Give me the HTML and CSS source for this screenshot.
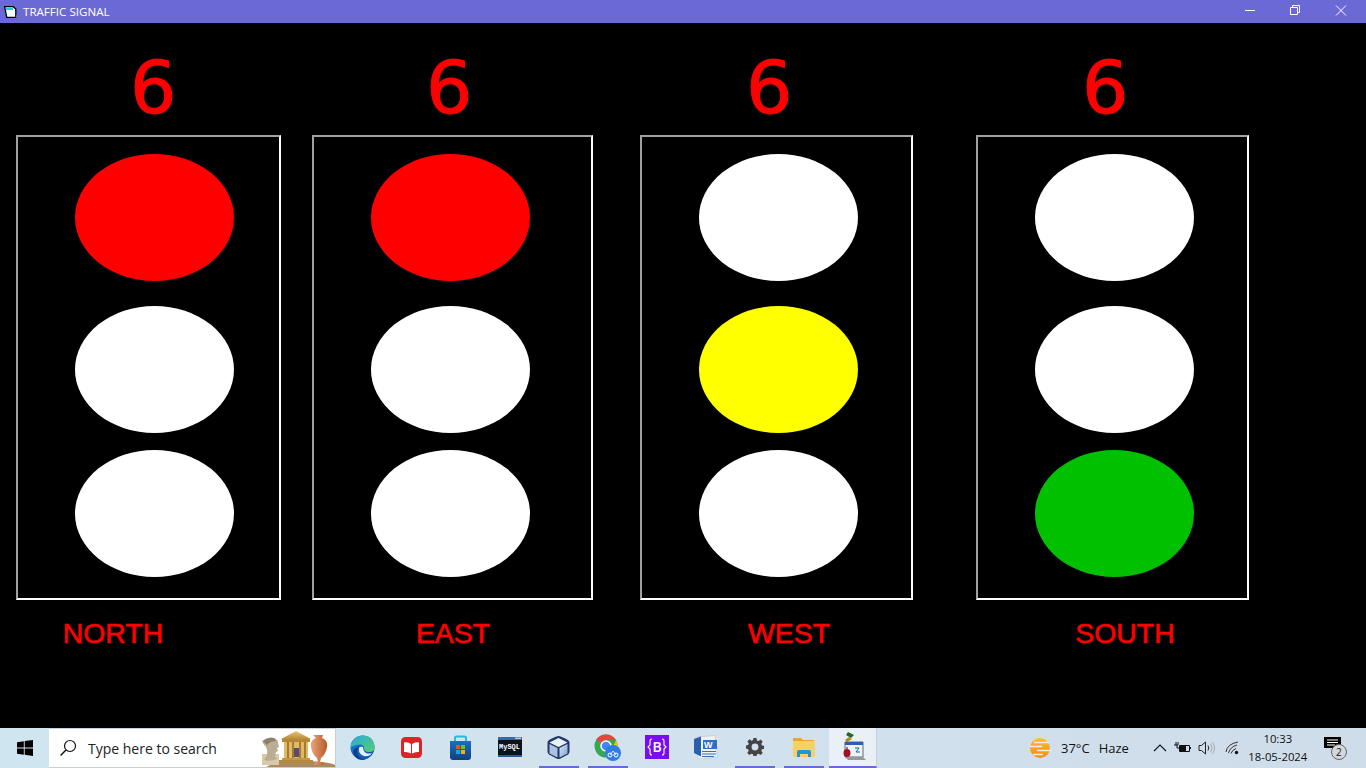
FILE: index.html
```html
<!DOCTYPE html>
<html lang="en">
<head>
<meta charset="utf-8">
<title>TRAFFIC SIGNAL</title>
<link rel="stylesheet" href="styles.css">
</head>
<body>
<div class="screen">
  <header class="titlebar">
    <svg class="app-icon" width="14" height="12" viewBox="0 0 14 12"><path d="M.7.7h8.500l2.600 2.300v8.300H2.700z" fill="#fff" stroke="#000" stroke-width="1.300"/><path d="M1.500 1.500h7.500v2.500H2z" fill="#22d0dc"/><path d="M12 9.500l2 0-1.500 2H12z" fill="#777"/></svg>
    <span class="title">TRAFFIC SIGNAL</span>
    <div class="win-controls">
      <svg class="wc" width="46" height="22" viewBox="0 0 46 22"><path d="M19 10.500h10" stroke="#fff" fill="none"/></svg>
      <svg class="wc" width="46" height="22" viewBox="0 0 46 22"><path d="M18.500 7.500h7v7h-7zM20.500 7.500v-2h7v7h-2" stroke="#fff" fill="none"/></svg>
      <svg class="wc" width="46" height="22" viewBox="0 0 46 22"><path d="M18 5.500l10 10M28 5.500l-10 10" stroke="#fff" fill="none"/></svg>
    </div>
  </header>
  <main class="stage">
    <section class="signal north">
      <div class="count">6</div>
      <div class="box"><i class="lamp red"></i><i class="lamp"></i><i class="lamp last"></i></div>
      <div class="name">NORTH</div>
    </section>
    <section class="signal east">
      <div class="count">6</div>
      <div class="box"><i class="lamp red"></i><i class="lamp"></i><i class="lamp last"></i></div>
      <div class="name">EAST</div>
    </section>
    <section class="signal west">
      <div class="count">6</div>
      <div class="box"><i class="lamp"></i><i class="lamp yellow"></i><i class="lamp last"></i></div>
      <div class="name">WEST</div>
    </section>
    <section class="signal south">
      <div class="count">6</div>
      <div class="box"><i class="lamp"></i><i class="lamp"></i><i class="lamp last green"></i></div>
      <div class="name">SOUTH</div>
    </section>
  </main>
  <footer class="taskbar">
    <div class="start">
      <svg width="16" height="16" viewBox="0 0 16 16"><path d="M0 2.300l6.800-1v6.300H0zM7.700 1.100L16 0v7.600H7.700zM0 8.400h6.800v6.300l-6.800-1zM7.700 8.400H16V16l-8.300-1.200z" fill="#000"/></svg>
    </div>
    <div class="search">
      <svg width="18" height="18" viewBox="0 0 18 18"><circle cx="11" cy="7" r="5.500" fill="none" stroke="#111" stroke-width="1.200"/><path d="M7 11l-5.500 5.500" stroke="#111" stroke-width="1.400"/></svg>
      <span class="search-text">Type here to search</span>
      <svg class="search-art" width="76" height="40" viewBox="0 0 76 40">
        <defs>
          <linearGradient id="vase" x1="0" y1="0" x2="1" y2="0"><stop offset="0" stop-color="#e9a679"/><stop offset="1" stop-color="#b8592a"/></linearGradient>
          <linearGradient id="stone" x1="0" y1="0" x2="0" y2="1"><stop offset="0" stop-color="#e8c878"/><stop offset="1" stop-color="#b98a3a"/></linearGradient>
        </defs>
        <ellipse cx="44" cy="41" rx="38" ry="8" fill="#a98a63"/>
        <path d="M3 26h17v11H3z" fill="#d9c9a9"/>
        <path d="M3 13q6-5 12-3 4 1 4 5l1 4-2 1 1 3-2 1-1 4 2 3q-6 3-13 1l3-5q1-4-1-8-3-3-4-6z" fill="#b9ad94"/>
        <path d="M4 13q5-4 11-3l2 3q-6 0-9 4z" fill="#8c7f6c"/>
        <path d="M22 11L37 3l15 8z" fill="url(#stone)"/>
        <path d="M23 11h28v3H23z" fill="#b9862f"/>
        <path d="M25 14h24v16H25z" fill="#dfb869"/>
        <path d="M28 14h2v16h-2zM33 14h2v16h-2zM40 14h2v16h-2zM45 14h2v16h-2z" fill="#a47c2e"/>
        <path d="M35 20h5v9h-5z" fill="#5a4a70"/>
        <path d="M23 30h28v2H23z" fill="#c8963e"/><path d="M20 32h34v3H20z" fill="#b5893b"/>
        <path d="M54 7h10l-1 3 2 1q4 3 3 8-1 7-6 11l-1 4h3l1 3h-10l1-3h3l-1-4q-5-4-6-11-1-5 3-8l2-1z" fill="url(#vase)"/>
      </svg>
    </div>
    <div class="apps">
      <div class="app"><svg width="25" height="25" viewBox="0 0 25 25"><defs><linearGradient id="edge1" x1="0" y1="0" x2="1" y2="1"><stop offset="0" stop-color="#1c7ed6"/><stop offset="1" stop-color="#0d4fa8"/></linearGradient><linearGradient id="edge2" x1="0" y1="0" x2="1" y2="1"><stop offset="0" stop-color="#2ba8e0"/><stop offset="1" stop-color="#56d06a"/></linearGradient></defs><circle cx="12.500" cy="12.500" r="12" fill="url(#edge1)"/><path d="M1 9Q5 .5 13 .5q11 0 11.500 12 0 4.500-5.500 4.500-5 0-5-4 0-3.500-4-3.500Q5 9.500 1 12z" fill="url(#edge2)"/><path d="M9 12q-3 3-1 8 3 4.500 8 4.500-1 .5-3.500.5Q5 25 3 17q1-4 6-5z" fill="#0c3f8e"/><path d="M9 13q1-2 4-1 0 4 3 6 3 1 6 0-3 4-8 3-6-2-5-8z" fill="#fff" opacity=".9"/></svg></div>
      <div class="app"><svg width="21" height="21" viewBox="0 0 21 21"><rect width="21" height="21" rx="4.500" fill="#d9252a"/><path d="M3 5.500q4-1 7 1.500v9.500q-3-2-7-1.500zM18 5.500q-4-1-7 1.500v9.500q3-2 7-1.500z" fill="#fff"/></svg></div>
      <div class="app"><svg width="23" height="25" viewBox="0 0 23 25"><defs><linearGradient id="bag" x1="0" y1="0" x2="0" y2="1"><stop offset="0" stop-color="#1a6fc0"/><stop offset="1" stop-color="#123f80"/></linearGradient></defs><path d="M6 7V3q0-1.500 1.500-1.500h8Q17 1.500 17 3v4" fill="none" stroke="#28b8e8" stroke-width="2"/><path d="M1 6h21v16q0 3-3 3H4q-3 0-3-3z" fill="url(#bag)"/><rect x="7" y="10" width="4" height="4" fill="#e8512b"/><rect x="12" y="10" width="4" height="4" fill="#78b82a"/><rect x="7" y="15" width="4" height="4" fill="#1ba1e2"/><rect x="12" y="15" width="4" height="4" fill="#f4b400"/></svg></div>
      <div class="app"><svg class="mysql" width="24" height="20" viewBox="0 0 24 20"><rect width="24" height="20" rx="1" fill="#0a1420"/><rect width="24" height="3" fill="#2a6db0"/><rect x="17" y=".5" width="6" height="1.500" fill="#bcd"/><rect y="18" width="24" height="2" fill="#2a5a90"/><text class="mysql-text" x="1" y="12">MySQL</text></svg></div>
      <div class="app on"><svg width="23" height="25" viewBox="0 0 23 25"><defs><linearGradient id="cube" x1="0" y1="0" x2="1" y2="1"><stop offset="0" stop-color="#d8ecf2"/><stop offset="1" stop-color="#7f9fd0"/></linearGradient></defs><path d="M11.500 1q2 0 9.500 4 1.500 1 1.500 2.500v9q0 2-1.500 3l-7.500 4q-2 1-4 0l-7.500-4Q.5 18.500.5 16.500v-9Q.5 6 2 5q7.500-4 9.500-4z" fill="#27366b"/><path d="M11.500 3l9 4.500-9 4.500-9-4.500z" fill="#e6f4ee"/><path d="M2.500 9l8 4v9.500l-8-4z" fill="#a9c4de"/><path d="M20.500 9l-8 4v9.500l8-4z" fill="url(#cube)"/></svg></div>
      <div class="app on"><svg width="27" height="27" viewBox="0 0 27 27"><circle cx="12" cy="12" r="11.500" fill="#34a853"/><path d="M12 .500a11.500 11.500 0 0 1 10 5.800H12a6 6 0 0 0-5.500 3.400L2.500 5.200A11.500 11.500 0 0 1 12 .500z" fill="#e8453c"/><path d="M22 6.300A11.500 11.500 0 0 1 14 23.300l4-8z" fill="#fbbc05"/><circle cx="12" cy="12" r="5" fill="#4285f4" stroke="#fff" stroke-width="1.500"/><circle cx="19" cy="19" r="8" fill="#2f7de1"/><circle cx="16" cy="21" r="2" fill="none" stroke="#fff"/><circle cx="22" cy="21" r="2" fill="none" stroke="#fff"/><path d="M16 21l3-4 3 4" fill="none" stroke="#fff" stroke-width=".8"/></svg></div>
      <div class="app"><svg width="24" height="24" viewBox="0 0 24 24"><rect width="24" height="24" fill="#7a0cf2"/><path d="M7 4Q5 4 5 6v4l-2 2 2 2v4q0 2 2 2M17 4q2 0 2 2v4l2 2-2 2v4q0 2-2 2" fill="none" stroke="#fff" stroke-width="1.100"/><text class="boot-text" x="12" y="17" text-anchor="middle">B</text></svg></div>
      <div class="app"><svg width="25" height="24" viewBox="0 0 25 24"><path d="M4 2L22 .5 24.500 22 5 24z" fill="#eef2f7" stroke="#b5bfcc" stroke-width=".6"/><path d="M10 5h14v9H10z" fill="#2a6fc9"/><text class="word-text" x="11" y="12.500">W</text><path d="M21 7.500h3M21 10h3M9 16.500h14M9 19h14M9 21.500h12" stroke="#3a6fb0" fill="none"/><path d="M1 4l7-2.500v20L1 18z" fill="#2a5fae"/></svg></div>
      <div class="app on"><svg width="18" height="18" viewBox="0 0 20 20"><path fill-rule="evenodd" fill="#444" d="M8.300 0h3.400l.5 2.700 1.700.7 2.300-1.600 2.400 2.400-1.600 2.300.7 1.700 2.700.5v3.400l-2.700.5-.7 1.700 1.600 2.300-2.400 2.400-2.300-1.600-1.700.7-.5 2.700H8.300l-.5-2.700-1.700-.7-2.300 1.600-2.400-2.400 1.600-2.300-.7-1.700L-.3 11.700V8.300l2.700-.5.7-1.700-1.600-2.300 2.400-2.400 2.300 1.600 1.700-.7zM10 6.200a3.800 3.800 0 1 0 0 7.600 3.800 3.800 0 0 0 0-7.600z"/></svg></div>
      <div class="app on"><svg width="22" height="20" viewBox="0 0 22 20"><path d="M0 1h8l2 2h11v3H0z" fill="#e6a82c"/><path d="M0 4h22v16H0z" fill="#f7d262"/><path d="M4 20v-5q0-2 2-2h10q2 0 2 2v5h-3v-3H7v3z" fill="#2a93d8"/></svg></div>
      <div class="app on active"><svg width="26" height="30" viewBox="0 0 26 30"><path d="M8 0l6 3-3 3-5-3z" fill="#1f6a1f"/><path d="M9 5l-4 3 2 2 5-3z" fill="#b08a20"/><path d="M5 10h18v15H5z" fill="#eef3fa" stroke="#666"/><path d="M5 10h18v3H5z" fill="#2a5fb8"/><path d="M15 16h4l-3 4h4" stroke="#16a" fill="none"/><ellipse cx="7" cy="21" rx="3.500" ry="4" fill="#a01024"/><path d="M7 17v-2" stroke="#111"/><path d="M23 25l3 3H8l-3-3z" fill="#999"/></svg></div>
    </div>
    <div class="tray">
      <svg class="weather" width="22" height="22" viewBox="0 0 22 22"><defs><linearGradient id="sun" x1="0" y1="0" x2="0" y2="1"><stop offset="0" stop-color="#fcc02e"/><stop offset="1" stop-color="#f08a1d"/></linearGradient></defs><circle cx="11" cy="11" r="10" fill="url(#sun)"/><path d="M5 5.500h15M1 9.500h12M8 13.500h14M4 17.500h10" stroke="#f3f0e4" stroke-width="1.300"/></svg>
      <span class="temp">37°C</span>
      <span class="haze">Haze</span>
      <svg class="tray-chev" width="14" height="8" viewBox="0 0 14 8"><path d="M1 7l6-6 6 6" fill="none" stroke="#111" stroke-width="1.100"/></svg>
      <svg class="tray-batt" width="17" height="12" viewBox="0 0 17 12"><path d="M0 3h4M2 0v3M4 0v3M3 3v3h3" stroke="#111" fill="none"/><path d="M5.500 3.500h10v6h-10z" fill="none" stroke="#111"/><path d="M6 4h6v5H6zM16 5h1v2h-1z" fill="#111"/></svg>
      <svg class="tray-vol" width="17" height="14" viewBox="0 0 17 14"><path d="M1 4.500h2.500L7.500 1v12L3.500 9.500H1z" fill="none" stroke="#222"/><path d="M10 4.500q1.500 2.500 0 5" fill="none" stroke="#222"/><path d="M12.500 2.500q3 4.500 0 9M14.500 1q4 6 0 12" fill="none" stroke="#aaa"/></svg>
      <svg class="tray-wifi" width="15" height="14" viewBox="0 0 15 14"><path d="M1 11Q2 3 13 1M3.500 12Q5 6 12 4M6 12.500Q7 9 11 7.500" fill="none" stroke="#333"/><circle cx="11.500" cy="11.500" r="1.700" fill="#111"/></svg>
      <div class="clock"><span>10:33</span><span>18-05-2024</span></div>
      <div class="notif">
        <svg width="17" height="16" viewBox="0 0 17 16"><path d="M0 0h17v11h-6l-3 4v-4H0z" fill="#000"/><path d="M3 3h11M3 5.500h11M3 8h8" stroke="#fff"/></svg>
        <span class="badge">2</span>
      </div>
    </div>
  </footer>
</div>
</body>
</html>
```
FILE: styles.css
```css
* { box-sizing: border-box; }
html, body { margin: 0; padding: 0; }
body { width: 1366px; height: 768px; overflow: hidden; background: #000; font-family: "Open Sans", "Noto Sans", sans-serif; }
.screen { width: 1366px; height: 768px; display: flex; flex-direction: column; background: #000; }

.titlebar { height: 23px; flex: none; background: #6b69d6; display: flex; align-items: center; color: #fff; padding-left: 4px; }
.app-icon { flex: none; }
.title { margin-left: 5px; font-size: 11.600px; color: #fff; }
.win-controls { margin-left: auto; display: flex; align-items: flex-start; height: 23px; padding-right: 2px; }
.wc { display: block; }

.stage { flex: 1; display: flex; align-items: flex-start; padding-left: 16px; }
.signal { display: flex; flex-direction: column; flex: none; }
.north { width: 265px; }
.east { width: 281px; margin-left: 31px; }
.west { width: 273px; margin-left: 47px; }
.south { width: 273px; margin-left: 63px; }
.count { height: 112px; font-family: "DejaVu Sans", sans-serif; font-size: 73px; -webkit-text-stroke: 1px #f00; line-height: 130px; color: #f00; }
.north .count { padding-left: 114px; }
.east .count { padding-left: 114px; }
.west .count { padding-left: 106px; }
.south .count { padding-left: 106px; }
.box { height: 465px; border: 2px solid #fff; border-top-color: #a0a0a0; border-left-color: #a0a0a0; display: flex; flex-direction: column; padding-top: 17px; }
.lamp { display: block; flex: none; width: 159px; height: 127px; margin-left: 57px; border-radius: 50%; background: #fff; margin-bottom: 25px; }
.lamp.last { margin-top: -8px; margin-bottom: 0; }
.lamp.red { background: #f00; }
.lamp.yellow { background: #ff0; }
.lamp.green { background: #00c000; }
.name { font-family: "Liberation Sans", Arial, sans-serif; font-size: 28.400px; -webkit-text-stroke: 0.6px #f00; line-height: 38px; color: #f00; margin-top: 14px; text-align: center; }
.north .name { padding-right: 71px; }
.east .name { margin-left: 1px; }
.west .name { padding-left: 25px; }
.south .name { padding-left: 25px; }

.taskbar { height: 40px; flex: none; display: flex; align-items: stretch; background: linear-gradient(90deg, #cfe6f0 0%, #d2e3ee 40%, #cfdcea 100%); color: #111; }
.start { width: 49px; flex: none; display: flex; align-items: center; justify-content: center; }
.search { width: 287px; flex: none; background: #fff; border: 1px solid #c6ced6; border-width: 1px 1px 1px 0; display: flex; align-items: center; padding-left: 10px; position: relative; overflow: hidden; }
.search-text { margin-left: 11px; font-size: 14px; color: #222; }
.search-art { position: absolute; right: 0; bottom: -1px; }
.apps { display: flex; flex: none; margin-left: 2px; }
.app { width: 49px; height: 40px; flex: none; display: flex; align-items: center; justify-content: center; border-bottom: 2px solid transparent; }
.app.on { border-bottom-color: #6b69d6; width: 40px; margin: 0 4.500px; }
.app.active { width: 48px; margin: 0 0 0 1px; background: #e9f0f7; border-right: 1px solid #c4cfe0; }
.mysql-text { font-family: "Liberation Mono", monospace; font-size: 7px; font-weight: 700; fill: #fff; }
.boot-text { font-family: "Open Sans", sans-serif; font-size: 14px; font-weight: 600; fill: #fff; }
.word-text { font-family: "Liberation Sans", sans-serif; font-size: 9px; font-weight: 700; fill: #fff; }
.tray { flex: 1; display: flex; align-items: center; position: relative; padding-left: 152px; }
.weather { flex: none; }
.temp { margin-left: 10px; font-size: 13px; }
.haze { margin-left: 9px; font-size: 13px; }
.tray-chev { margin-left: 24px; flex: none; }
.tray-batt { margin-left: 7px; flex: none; }
.tray-vol { margin-left: 7px; flex: none; }
.tray-wifi { margin-left: 10px; flex: none; }
.clock { margin-left: 7px; display: flex; flex-direction: column; align-items: center; font-size: 11.300px; line-height: 18px; width: 62px; }
.notif { margin-left: 15px; position: relative; width: 24px; height: 24px; }
.badge { position: absolute; left: 7px; top: 8px; width: 16px; height: 16px; border-radius: 50%; background: #d4d8dc; border: 1px solid #666; font-size: 10px; line-height: 14px; text-align: center; }
```
